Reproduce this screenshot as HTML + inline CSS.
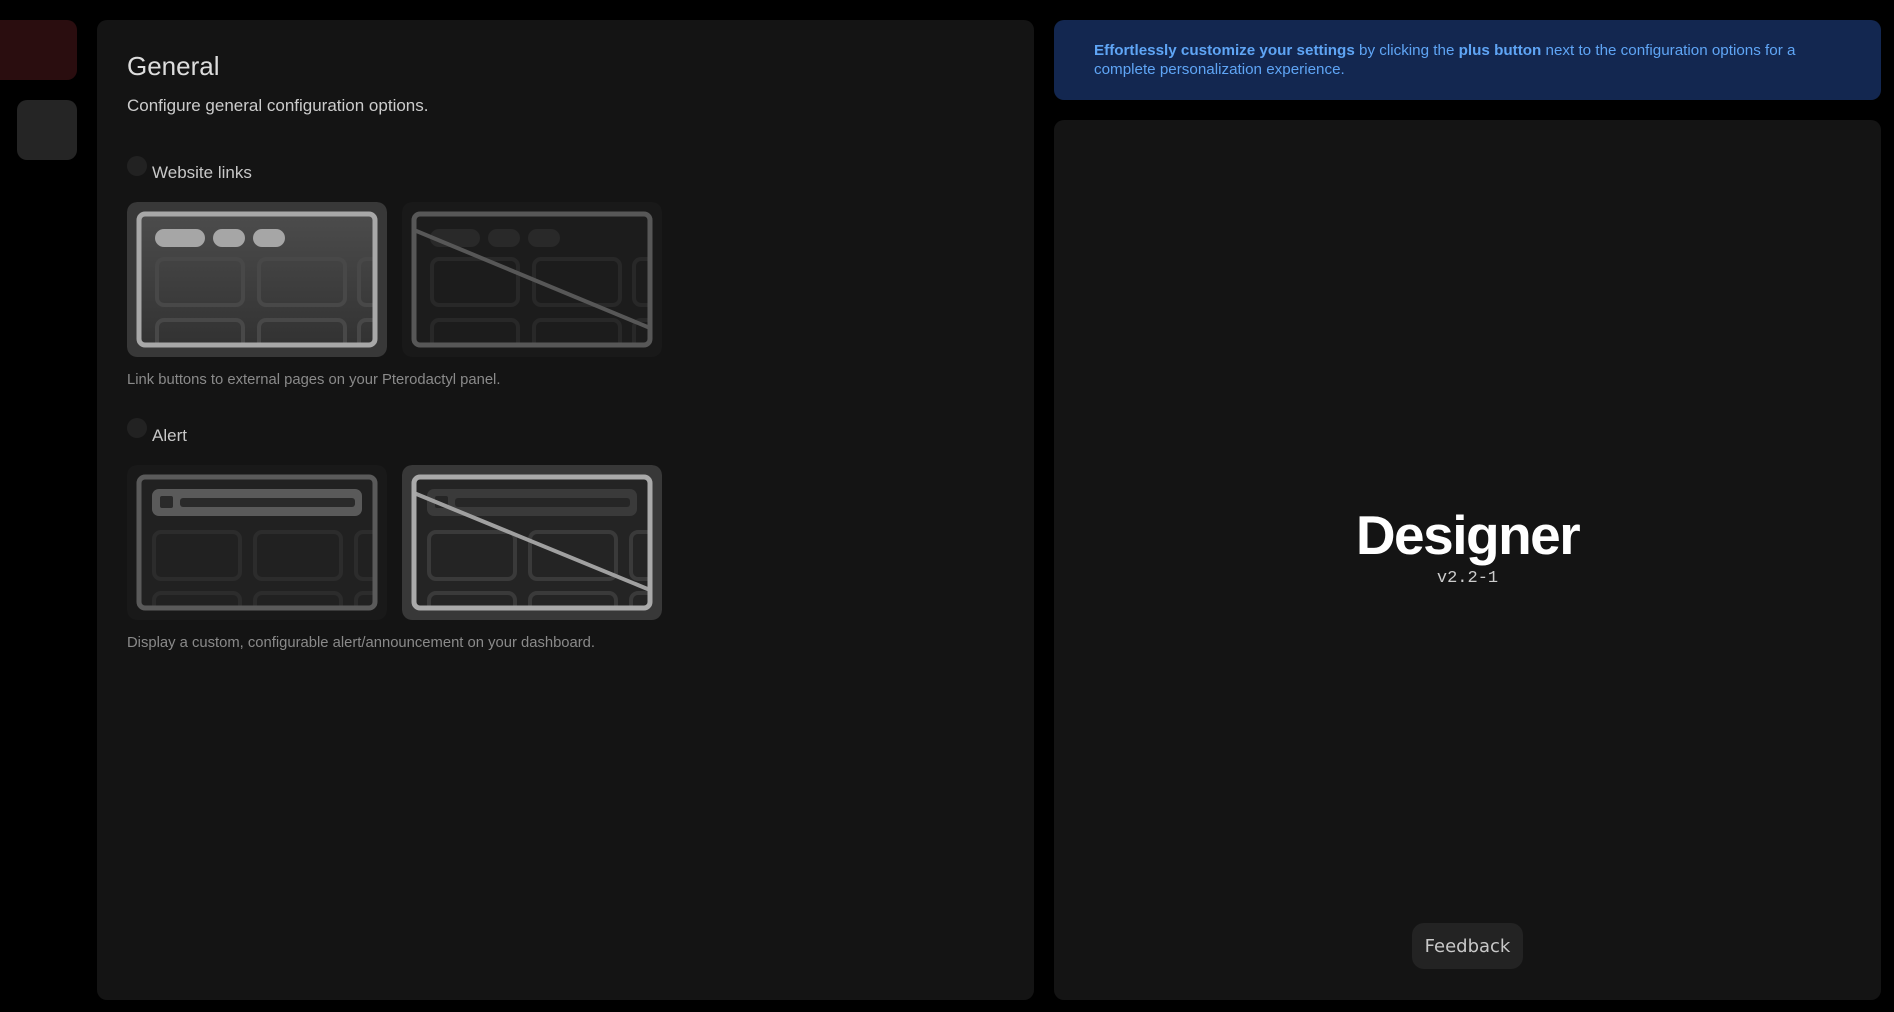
<!DOCTYPE html>
<html><head><meta charset="utf-8"><style>
*{margin:0;padding:0;box-sizing:border-box}
body{width:1894px;height:1012px;background:#000;position:relative;overflow:hidden;font-family:"Liberation Sans",sans-serif}
.abs{position:absolute}
.card{position:absolute;width:260px;height:155px;border-radius:10px}
.t{position:absolute;white-space:nowrap}
</style></head><body>
<div class="abs" style="left:-10px;top:20px;width:87px;height:60px;background:#2a0d0f;border-radius:10px"></div>
<div class="abs" style="left:17px;top:100px;width:60px;height:60px;background:#252525;border-radius:10px"></div>

<div class="abs" style="left:97px;top:20px;width:937px;height:980px;background:#141414;border-radius:10px"></div>
<div class="t" style="left:127px;top:51px;font-size:26px;color:#ddd">General</div>
<div class="t" style="left:127px;top:96px;font-size:17px;color:#ccc">Configure general configuration options.</div>

<div class="abs" style="left:127px;top:156px;width:20px;height:20px;border-radius:50%;background:#222"></div>
<div class="t" style="left:152px;top:163px;font-size:17px;color:#c8c8c8">Website links</div>

<svg class="card" style="left:127px;top:202px" width="260" height="155" viewBox="0 0 260 155">
<defs><linearGradient id="g1" x1="0" y1="0" x2="0" y2="1"><stop offset="0" stop-color="#4c4c4c"/><stop offset="1" stop-color="#323232"/></linearGradient>
<clipPath id="c"><rect x="12" y="12" width="236" height="131" rx="6"/></clipPath></defs>
<rect width="260" height="155" rx="10" fill="#383838"/>
<rect x="12" y="12" width="236" height="131" rx="6" fill="url(#g1)"/>
<g clip-path="url(#c)" fill="none" stroke="#484848" stroke-width="4">
<rect x="30" y="57" width="86" height="46" rx="7"/><rect x="132" y="57" width="86" height="46" rx="7"/><rect x="232" y="57" width="86" height="46" rx="7"/>
<rect x="30" y="118" width="86" height="46" rx="7"/><rect x="132" y="118" width="86" height="46" rx="7"/><rect x="232" y="118" width="86" height="46" rx="7"/>
</g>
<rect x="28" y="27" width="50" height="18" rx="9" fill="#a6a6a6"/><rect x="86" y="27" width="32" height="18" rx="9" fill="#a6a6a6"/><rect x="126" y="27" width="32" height="18" rx="9" fill="#a6a6a6"/>
<rect x="12" y="12" width="236" height="131" rx="6" fill="none" stroke="#a8a8a8" stroke-width="5"/>
</svg>

<svg class="card" style="left:402px;top:202px" width="260" height="155" viewBox="0 0 260 155">
<rect width="260" height="155" rx="10" fill="#191919"/>
<rect x="12" y="12" width="236" height="131" rx="6" fill="#1c1c1c"/>
<g clip-path="url(#c)" fill="none" stroke="#282828" stroke-width="4">
<rect x="30" y="57" width="86" height="46" rx="7"/><rect x="132" y="57" width="86" height="46" rx="7"/><rect x="232" y="57" width="86" height="46" rx="7"/>
<rect x="30" y="118" width="86" height="46" rx="7"/><rect x="132" y="118" width="86" height="46" rx="7"/><rect x="232" y="118" width="86" height="46" rx="7"/>
</g>
<rect x="28" y="27" width="50" height="18" rx="9" fill="#292929"/><rect x="86" y="27" width="32" height="18" rx="9" fill="#292929"/><rect x="126" y="27" width="32" height="18" rx="9" fill="#292929"/>
<line x1="12" y1="28" x2="248" y2="126" stroke="#575757" stroke-width="4"/>
<rect x="12" y="12" width="236" height="131" rx="6" fill="none" stroke="#575757" stroke-width="5"/>
</svg>
<div class="t" style="left:127px;top:372px;font-size:14.8px;color:#8a8a8a">Link buttons to external pages on your Pterodactyl panel.</div>

<div class="abs" style="left:127px;top:418px;width:20px;height:20px;border-radius:50%;background:#222"></div>
<div class="t" style="left:152px;top:426px;font-size:17px;color:#c8c8c8">Alert</div>

<svg class="card" style="left:127px;top:465px" width="260" height="155" viewBox="0 0 260 155">
<rect width="260" height="155" rx="10" fill="#191919"/>
<rect x="12" y="12" width="236" height="131" rx="6" fill="#212121"/>
<g clip-path="url(#c)" fill="none" stroke="#2c2c2c" stroke-width="4">
<rect x="27" y="67" width="86" height="47" rx="7"/><rect x="128" y="67" width="86" height="47" rx="7"/><rect x="229" y="67" width="86" height="47" rx="7"/>
<rect x="27" y="128" width="86" height="47" rx="7"/><rect x="128" y="128" width="86" height="47" rx="7"/><rect x="229" y="128" width="86" height="47" rx="7"/>
</g>
<rect x="25" y="24" width="210" height="27" rx="7" fill="#5a5a5a"/>
<rect x="33" y="31" width="13" height="12" rx="2" fill="#2a2a2a"/>
<rect x="53" y="33" width="175" height="9" rx="3" fill="#2a2a2a"/>
<rect x="12" y="12" width="236" height="131" rx="6" fill="none" stroke="#5a5a5a" stroke-width="5"/>
</svg>

<svg class="card" style="left:402px;top:465px" width="260" height="155" viewBox="0 0 260 155">
<rect width="260" height="155" rx="10" fill="#383838"/>
<rect x="12" y="12" width="236" height="131" rx="6" fill="#242424"/>
<g clip-path="url(#c)" fill="none" stroke="#3a3a3a" stroke-width="4">
<rect x="27" y="67" width="86" height="47" rx="7"/><rect x="128" y="67" width="86" height="47" rx="7"/><rect x="229" y="67" width="86" height="47" rx="7"/>
<rect x="27" y="128" width="86" height="47" rx="7"/><rect x="128" y="128" width="86" height="47" rx="7"/><rect x="229" y="128" width="86" height="47" rx="7"/>
</g>
<rect x="25" y="24" width="210" height="27" rx="7" fill="#3a3a3a"/>
<rect x="33" y="31" width="13" height="12" rx="2" fill="#262626"/>
<rect x="53" y="33" width="175" height="9" rx="3" fill="#262626"/>
<line x1="12" y1="28" x2="248" y2="125" stroke="#a0a0a0" stroke-width="4"/>
<rect x="12" y="12" width="236" height="131" rx="6" fill="none" stroke="#aaaaaa" stroke-width="5"/>
</svg>
<div class="t" style="left:127px;top:635px;font-size:14.8px;color:#8a8a8a">Display a custom, configurable alert/announcement on your dashboard.</div>

<div class="abs" style="left:1054px;top:20px;width:827px;height:80px;background:#132750;border-radius:10px"></div>
<div class="abs" style="left:1094px;top:41px;width:745px;font-size:15.2px;line-height:19px;color:#5fa5f5">
<b>Effortlessly customize your settings</b> by clicking the <b>plus button</b> next to the configuration options for a complete personalization experience.</div>

<div class="abs" style="left:1054px;top:120px;width:827px;height:880px;background:#141414;border-radius:10px"></div>
<div class="t" style="left:1054px;width:827px;text-align:center;top:503px;font-size:55px;font-weight:bold;letter-spacing:-1.5px;color:#fff">Designer</div>
<div class="t" style="left:1054px;width:827px;text-align:center;top:569px;font-size:17px;font-family:'Liberation Mono',monospace;color:#ccc">v2.2-1</div>
<div class="abs" style="left:1412px;top:923px;width:111px;height:46px;background:#232323;border-radius:12px;color:#c8c8c8;font-family:'DejaVu Sans',sans-serif;font-size:18px;line-height:48px;text-align:center">Feedback</div>
</body></html>
